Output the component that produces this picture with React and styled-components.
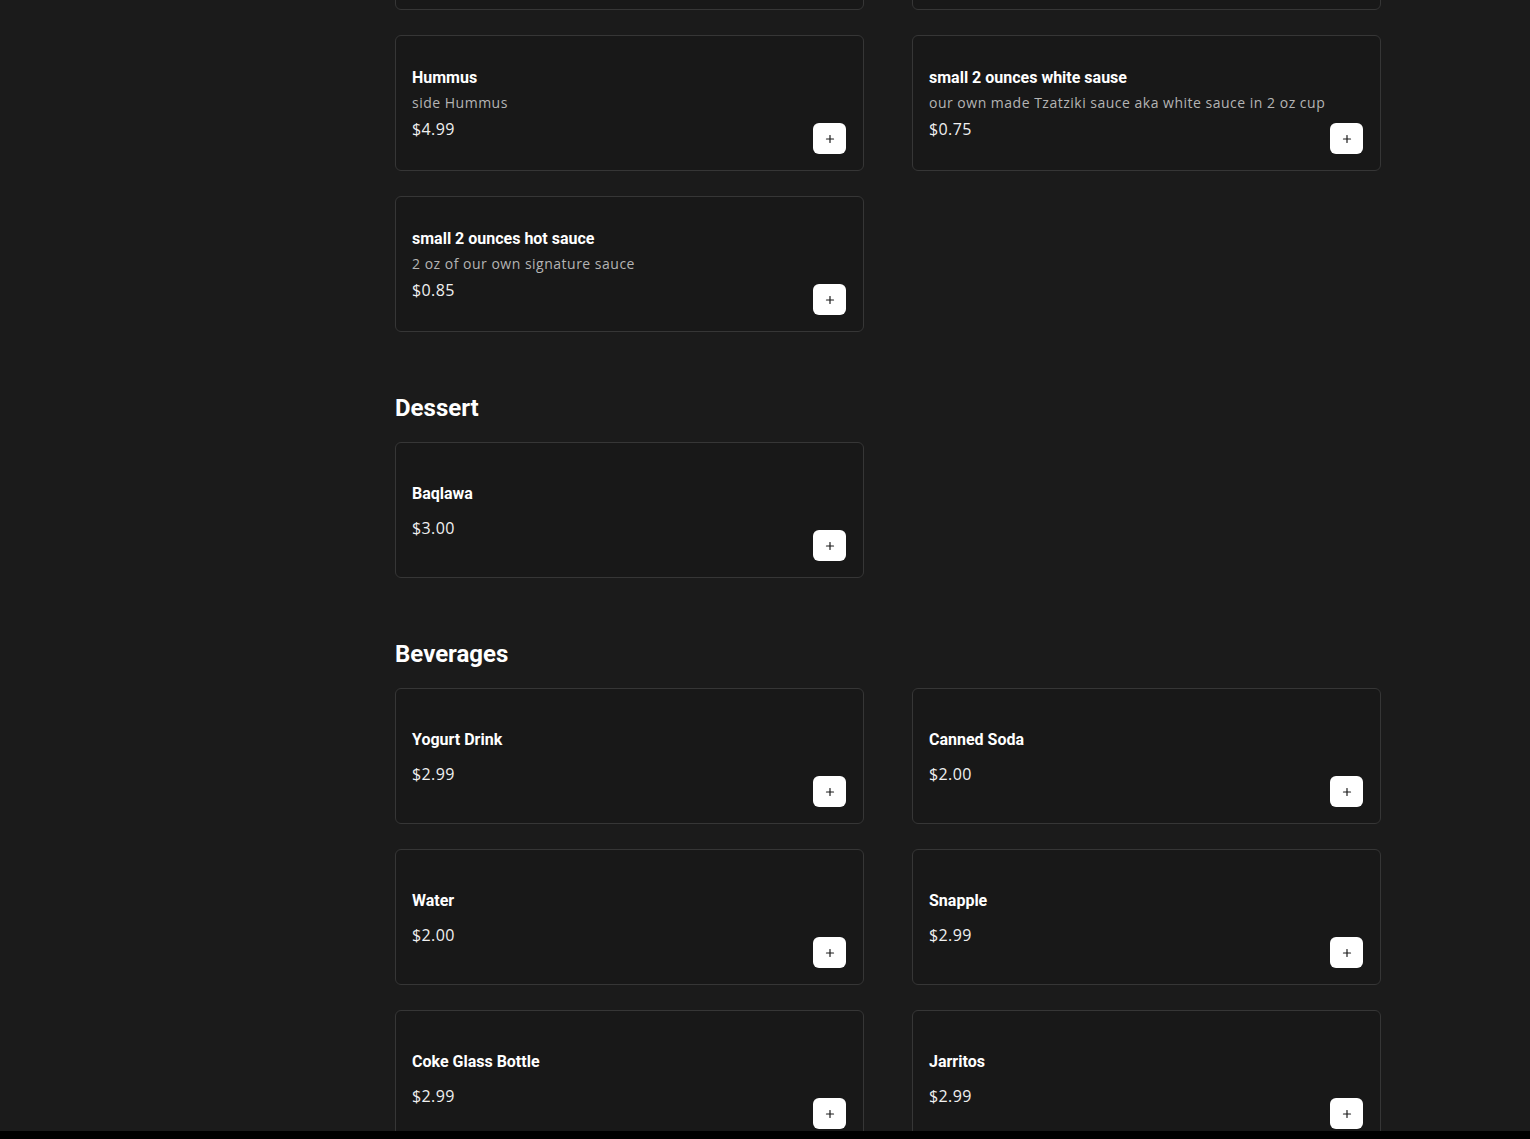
import React from "react";
import styled, { createGlobalStyle } from "styled-components";
import { Plus } from "lucide-react";

const GlobalStyle = createGlobalStyle`
  html, body {
    margin: 0;
    padding: 0;
    background: #1b1b1b;
    height: 100%;
    overflow: hidden;
  }
  #root {
    height: 100%;
  }
`;

const Page = styled.div`
  height: 100vh;
  display: flex;
  flex-direction: column;
  background: #1b1b1b;
  font-family: Roboto, "Liberation Sans", sans-serif;
`;

const Scroller = styled.div`
  flex: 1;
  overflow: hidden;
`;

const Menu = styled.main`
  width: 986px;
  margin: -126px 0 0 395px;
`;

const Section = styled.section`
  & + & {
    margin-top: 61px;
  }
`;

const SectionTitle = styled.h2`
  margin: 0 0 19px;
  font-size: 24px;
  line-height: 30px;
  font-weight: 700;
  color: #ffffff;
`;

const Grid = styled.div`
  display: grid;
  grid-template-columns: repeat(2, 469px);
  column-gap: 48px;
  row-gap: 25px;
`;

const Card = styled.div`
  box-sizing: border-box;
  height: 136px;
  border: 1px solid #363636;
  border-radius: 6px;
  background: #181818;
  padding: 0 17px 16px 16px;
  display: flex;
  align-items: stretch;
  justify-content: space-between;
`;

const Info = styled.div`
  display: flex;
  flex-direction: column;
  justify-content: center;
  padding-top: 19px;
`;

const ItemName = styled.div`
  font-size: 16px;
  line-height: 20px;
  font-weight: 700;
  color: #ffffff;
  margin-bottom: 4px;
`;

const ItemDesc = styled.div`
  font-family: "Open Sans", "Liberation Sans", sans-serif;
  font-size: 14px;
  line-height: 22px;
  letter-spacing: 0.5px;
  color: #b4b4b4;
  margin-bottom: 3px;
`;

const ItemPrice = styled.div`
  font-family: "Open Sans", "Liberation Sans", sans-serif;
  font-size: 16px;
  line-height: 24px;
  letter-spacing: 0.4px;
  color: #f0f0f0;
  margin-top: ${(p) => (p.$alone ? "8px" : "0")};
`;

const AddButton = styled.button`
  align-self: flex-end;
  width: 33px;
  height: 31px;
  border: none;
  border-radius: 6px;
  background: #ffffff;
  color: #1b1b1b;
  display: flex;
  align-items: center;
  justify-content: center;
  padding: 0;
  cursor: pointer;
`;

const BottomBar = styled.div`
  height: 8px;
  background: #000000;
  flex-shrink: 0;
`;

const sections = [
  {
    title: "Sides",
    hideTitle: true,
    items: [
      { name: "Fries", price: "$3.99" },
      { name: "Rice", price: "$3.99" },
      { name: "Hummus", desc: "side Hummus", price: "$4.99" },
      {
        name: "small 2 ounces white sause",
        desc: "our own made Tzatziki sauce aka white sauce in 2 oz cup",
        price: "$0.75",
      },
      {
        name: "small 2 ounces hot sauce",
        desc: "2 oz of our own signature sauce",
        price: "$0.85",
      },
    ],
  },
  {
    title: "Dessert",
    items: [{ name: "Baqlawa", price: "$3.00" }],
  },
  {
    title: "Beverages",
    items: [
      { name: "Yogurt Drink", price: "$2.99" },
      { name: "Canned Soda", price: "$2.00" },
      { name: "Water", price: "$2.00" },
      { name: "Snapple", price: "$2.99" },
      { name: "Coke Glass Bottle", price: "$2.99" },
      { name: "Jarritos", price: "$2.99" },
    ],
  },
];

const MenuCard = ({ item }) => (
  <Card>
    <Info>
      <ItemName>{item.name}</ItemName>
      {item.desc && <ItemDesc>{item.desc}</ItemDesc>}
      <ItemPrice $alone={!item.desc}>{item.price}</ItemPrice>
    </Info>
    <AddButton aria-label={`Add ${item.name}`}>
      <Plus size={12} strokeWidth={2.4} />
    </AddButton>
  </Card>
);

const App = () => {
  return (
    <>
      <GlobalStyle />
      <Page>
        <Scroller>
          <Menu>
            {sections.map((section) => (
              <Section key={section.title}>
                {!section.hideTitle && (
                  <SectionTitle>{section.title}</SectionTitle>
                )}
                <Grid>
                  {section.items.map((item) => (
                    <MenuCard key={item.name} item={item} />
                  ))}
                </Grid>
              </Section>
            ))}
          </Menu>
        </Scroller>
        <BottomBar />
      </Page>
    </>
  );
};

export default App;
